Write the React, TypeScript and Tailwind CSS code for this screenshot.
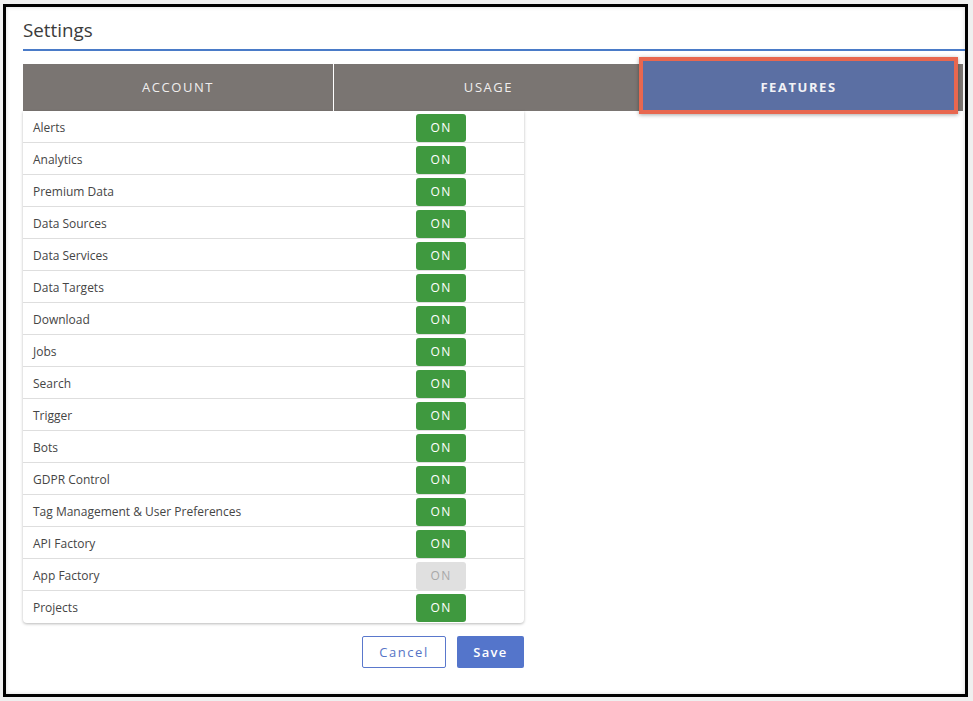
import { useState } from 'react';

const features: { name: string; enabled: boolean }[] = [
  { name: 'Alerts', enabled: true },
  { name: 'Analytics', enabled: true },
  { name: 'Premium Data', enabled: true },
  { name: 'Data Sources', enabled: true },
  { name: 'Data Services', enabled: true },
  { name: 'Data Targets', enabled: true },
  { name: 'Download', enabled: true },
  { name: 'Jobs', enabled: true },
  { name: 'Search', enabled: true },
  { name: 'Trigger', enabled: true },
  { name: 'Bots', enabled: true },
  { name: 'GDPR Control', enabled: true },
  { name: 'Tag Management & User Preferences', enabled: true },
  { name: 'API Factory', enabled: true },
  { name: 'App Factory', enabled: false },
  { name: 'Projects', enabled: true },
];

const tabs = ['Account', 'Usage', 'Features'];

export default function App() {
  const [active] = useState('Features');

  return (
    <div
      className="w-[973px] h-[701px] bg-[#efefef] pl-[3px] pt-[4px] pr-[5px] pb-[4px] flex"
      style={{ fontFamily: '"Open Sans", "Liberation Sans", sans-serif' }}
    >
      <div className="flex-1 border-[3px] border-black bg-white shadow-[inset_0_0_4px_rgba(0,0,0,0.15)] flex flex-col pl-[17px] pt-[10px]">
        {/* Header */}
        <h1 className="text-[18.8px] leading-[26px] text-[#3b3b3b] font-normal">Settings</h1>
        <div className="mt-[6px] h-[2px] bg-[#4a7bc8]" />

        {/* Tabs */}
        <div className="mt-[13px] mr-[2px] grid grid-cols-[310px_309px_1fr] gap-px bg-white h-[47px]">
          {tabs.map((tab) =>
            tab === active ? (
              <div key={tab} className="relative bg-[#7a7572]">
                <div className="absolute -left-[5px] -top-[7px] right-[5px] -bottom-[3px] border-[4px] border-[#e8674f] shadow-[0_1px_4px_rgba(0,0,0,0.35)] bg-[#5b6fa3] flex items-center justify-center pt-[4px]">
                  <span className="text-[13px] font-bold tracking-[0.12em] text-[#f2f2f6] uppercase">{tab}</span>
                </div>
              </div>
            ) : (
              <div key={tab} className="bg-[#7a7572] flex items-center justify-center pt-[1px]">
                <span className="text-[13px] tracking-[0.12em] text-[#f0eeee] uppercase">{tab}</span>
              </div>
            )
          )}
        </div>

        {/* Feature table */}
        <div className="w-[501px] bg-white rounded-b-[4px] shadow-[0_1px_3px_rgba(0,0,0,0.28)]">
          {features.map((f, i) => (
            <div
              key={f.name}
              className={`h-[32px] flex items-center pl-[10px] pt-[2px] ${i < features.length - 1 ? 'border-b border-[#dedede]' : ''}`}
            >
              <span className="flex-1 text-[12px] text-[#454545]">{f.name}</span>
              <div className="w-[108px]">
                <button
                  className={`w-[50px] h-[28px] rounded-[3px] text-[12px] tracking-[0.1em] ${
                    f.enabled ? 'bg-[#3f993f] text-white' : 'bg-[#e0e0e0] text-[#a8a8a8]'
                  }`}
                >
                  ON
                </button>
              </div>
            </div>
          ))}
        </div>

        {/* Actions */}
        <div className="w-[501px] flex justify-end gap-[11px] mt-[13px]">
          <button className="w-[84px] h-[32px] border border-[#5a78cc] rounded-[2px] text-[13px] tracking-[0.12em] text-[#5674c6] bg-white pt-[2px]">
            Cancel
          </button>
          <button className="w-[67px] h-[32px] rounded-[2px] bg-[#5475cb] text-[13px] font-semibold tracking-[0.1em] text-white pt-[2px]">
            Save
          </button>
        </div>
      </div>
    </div>
  );
}
